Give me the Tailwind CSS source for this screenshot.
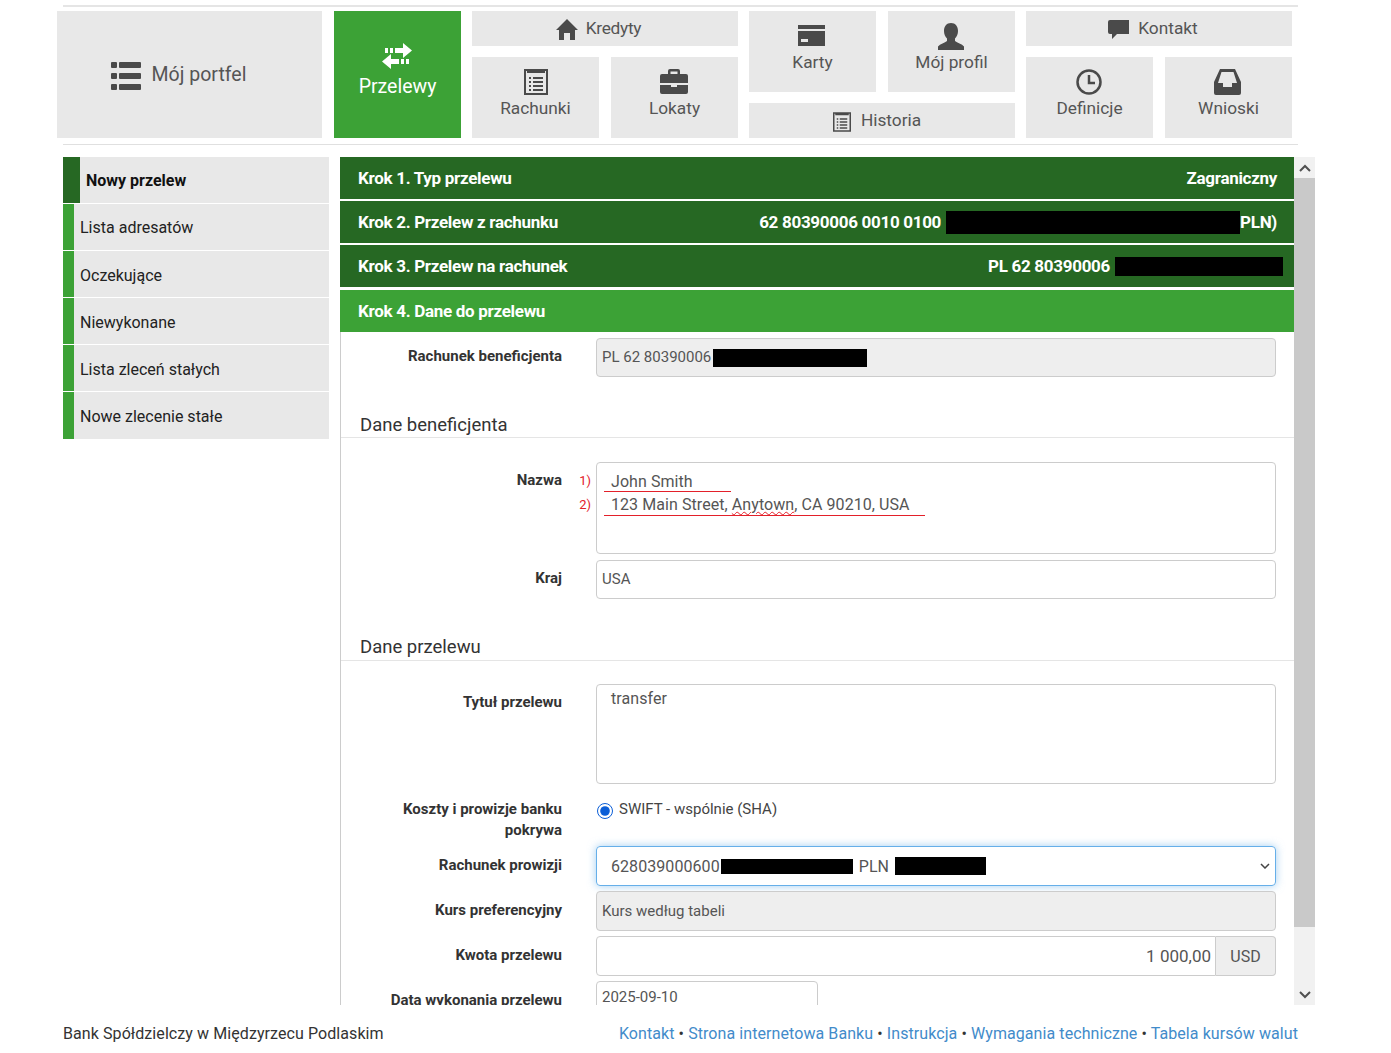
<!DOCTYPE html>
<html lang="pl">
<head>
    <meta charset="UTF-8">
    <meta name="viewport" content="width=device-width, initial-scale=1.0">
    <title>Bank - Przelewy</title>
    <script src="https://cdn.jsdelivr.net/npm/@tailwindcss/browser@4"></script>
</head>
<body class="bg-white font-['Roboto',sans-serif] text-[#555] h-[1053px] overflow-hidden">

<div class="w-[1235px] ml-[63px] mt-[5px] h-[2px] bg-[#e5e5e5]"></div>

<!-- menu -->
<nav class="ml-[57px] mt-[4px] w-[1235px] h-[127px] flex gap-[11px] text-[17.3px] leading-[24px]">
    <a class="w-[265px] mr-[1px] bg-[#e8e8e8] flex items-center justify-center gap-[11px] pr-[22px] text-[19.5px]">
        <svg class="w-[30px] h-[28px] mt-[3px]" viewBox="0 0 30 28" fill="#4a4a4a"><rect x="0" y="0" width="6" height="6" rx="1"/><rect x="8" y="0" width="22" height="6" rx="1"/><rect x="0" y="11" width="6" height="6" rx="1"/><rect x="8" y="11" width="22" height="6" rx="1"/><rect x="0" y="22" width="6" height="6" rx="1"/><rect x="8" y="22" width="22" height="6" rx="1"/></svg>
        <span class="mt-[1px]">Mój portfel</span>
    </a>
    <a class="w-[127px] bg-[#3ca236] text-white flex flex-col items-center pt-[32px] gap-[6px] text-[19.5px]">
        <svg class="w-[30px] h-[26px] -ml-[2px]" viewBox="0 0 30 26" fill="#fff"><rect x="3" y="5" width="3" height="5"/><rect x="8" y="5" width="3" height="5"/><path d="M13 5h8V0l9 7.500L21 15v-5h-8z"/><rect x="24" y="16" width="3" height="5"/><rect x="19" y="16" width="3" height="5"/><path d="M17 16H9v-5L0 18.500 9 26v-5h8z"/></svg>
        <span>Przelewy</span>
    </a>
    <div class="w-[266px] flex flex-col gap-[11px]">
        <a class="h-[35px] bg-[#e8e8e8] flex items-center justify-center gap-[8px] pr-[13px]">
            <svg class="w-[22px] h-[21px] mt-[2px]" viewBox="0 0 22 21" fill="#4a4a4a"><path d="M11 0 22 11h-3v10h-5v-7H8v7H3V11H0z"/></svg>
            <span class="-mt-[1px] tracking-[-0.3px]">Kredyty</span>
        </a>
        <div class="flex justify-between h-[81px]">
            <a class="w-[127px] bg-[#e8e8e8] flex flex-col items-center pt-[12px] gap-[1px]">
                <svg class="w-[24px] h-[26px]" viewBox="0 0 24 26" fill="none" stroke="#4a4a4a"><rect x="1" y="1" width="22" height="24" stroke-width="2"/><path d="M3 2.500h18" stroke-width="3"/><path d="M5 9h2M9 9h10M5 13h2M9 13h10M5 17h2M9 17h10M5 21h2M9 21h10" stroke-width="2"/></svg>
                <span>Rachunki</span>
            </a>
            <a class="w-[127px] bg-[#e8e8e8] flex flex-col items-center pt-[12px] gap-[2px]">
                <svg class="w-[28px] h-[25px] -ml-[2px]" viewBox="0 0 28 25" fill="#4a4a4a"><path d="M10 0h8a2 2 0 0 1 2 2v3h6a2 2 0 0 1 2 2v7H0V7a2 2 0 0 1 2-2h6V2a2 2 0 0 1 2-2zm.500 2.500V5h7V2.500z"/><path d="M0 16h11v2h6v-2h11v7a2 2 0 0 1-2 2H2a2 2 0 0 1-2-2z"/></svg>
                <span>Lokaty</span>
            </a>
        </div>
    </div>
    <div class="w-[266px] flex flex-col gap-[11px]">
        <div class="flex justify-between h-[81px]">
            <a class="w-[127px] bg-[#e8e8e8] flex flex-col items-center pt-[14px] gap-[4px]">
                <svg class="w-[27px] h-[21px] -ml-[2px]" viewBox="0 0 27 21" fill="#4a4a4a"><path d="M0 0h27v4H0z"/><path d="M0 6h27v15H0zm3 8v3h7v-3z" fill-rule="evenodd"/></svg>
                <span>Karty</span>
            </a>
            <a class="w-[127px] bg-[#e8e8e8] flex flex-col items-center pt-[12px]">
                <svg class="w-[28px] h-[27px] -ml-[2px]" viewBox="0 0 28 27" fill="#4a4a4a"><path d="M14 0c4.500 0 7 3.500 7 8 0 3-1.200 5.500-3 7.500V18c2 1.500 7 3 9 5.500V27H1v-3.500C3 21 8 19.500 10 18v-2.500C8.200 13.500 7 11 7 8c0-4.500 2.500-8 7-8z"/></svg>
                <span>Mój profil</span>
            </a>
        </div>
        <a class="h-[35px] bg-[#e8e8e8] flex items-center justify-center gap-[10px] pr-[10px]">
            <svg class="w-[18px] h-[20px] mt-[2px]" viewBox="0 0 24 26" fill="none" stroke="#4a4a4a"><rect x="1" y="1" width="22" height="24" stroke-width="2"/><path d="M3 2.500h18" stroke-width="3"/><path d="M5 9h2M9 9h10M5 13h2M9 13h10M5 17h2M9 17h10M5 21h2M9 21h10" stroke-width="2"/></svg>
            <span class="-mt-[1px]">Historia</span>
        </a>
    </div>
    <div class="w-[266px] flex flex-col gap-[11px]">
        <a class="h-[35px] bg-[#e8e8e8] flex items-center justify-center gap-[9px] pr-[12px]">
            <svg class="w-[21px] h-[19px] mt-[2px]" viewBox="0 0 21 19" fill="#4a4a4a"><path d="M2 0h19v14H9l-5 5v-5H2a2 2 0 0 1-2-2V2a2 2 0 0 1 2-2z"/></svg>
            <span class="-mt-[1px]">Kontakt</span>
        </a>
        <div class="flex justify-between h-[81px]">
            <a class="w-[127px] bg-[#e8e8e8] flex flex-col items-center pt-[12px] gap-[1px]">
                <svg class="w-[26px] h-[26px] -ml-[2px]" viewBox="0 0 26 26" fill="none" stroke="#4a4a4a"><circle cx="13" cy="13" r="11.500" stroke-width="2.500"/><path d="M13 6v8h6" stroke-width="2.500"/></svg>
                <span>Definicje</span>
            </a>
            <a class="w-[127px] bg-[#e8e8e8] flex flex-col items-center pt-[12px] gap-[1px]">
                <svg class="w-[27px] h-[26px] -ml-[2px]" viewBox="0 0 27 26" fill="#4a4a4a"><path d="M6 0h15l6 13v11a2 2 0 0 1-2 2H2a2 2 0 0 1-2-2V13zm1.500 3L4 14h5v4h9v-4h5L19.500 3z" fill-rule="evenodd"/></svg>
                <span>Wnioski</span>
            </a>
        </div>
    </div>
</nav>

<div class="w-[1235px] ml-[63px] mt-[6px] h-[1px] bg-[#e0e0e0]"></div>

<div class="ml-[63px] mt-[12px] flex h-[848px]">
    <!-- side menu -->
    <aside class="w-[266px] flex flex-col gap-[1px] text-[16px] text-[#222] shrink-0">
        <a class="h-[46px] bg-[#e8e8e8] border-l-[17px] border-[#266823] pl-[6px] pt-[2px] flex items-center font-bold text-[#111]">Nowy przelew</a>
        <a class="h-[46px] bg-[#e8e8e8] border-l-[11px] border-[#3ca236] pl-[6px] pt-[2px] flex items-center">Lista adresatów</a>
        <a class="h-[46px] bg-[#e8e8e8] border-l-[11px] border-[#3ca236] pl-[6px] pt-[3px] flex items-center">Oczekujące</a>
        <a class="h-[46px] bg-[#e8e8e8] border-l-[11px] border-[#3ca236] pl-[6px] pt-[3px] flex items-center">Niewykonane</a>
        <a class="h-[46px] bg-[#e8e8e8] border-l-[11px] border-[#3ca236] pl-[6px] pt-[3px] flex items-center">Lista zleceń stałych</a>
        <a class="h-[47px] bg-[#e8e8e8] border-l-[11px] border-[#3ca236] pl-[6px] pt-[2px] flex items-center">Nowe zlecenie stałe</a>
    </aside>

    <!-- form panel -->
    <main class="ml-[11px] w-[954px] shrink-0 overflow-hidden">
        <div class="h-[42px] bg-[#266823] text-white font-bold text-[17px] tracking-[-0.3px] flex items-center justify-between pt-[2px] pl-[18px] pr-[17px]">
            <span>Krok 1. Typ przelewu</span><span>Zagraniczny</span>
        </div>
        <div class="h-[42px] mt-[2px] bg-[#266823] text-white font-bold text-[17px] tracking-[-0.3px] flex items-center justify-between pl-[18px] pr-[17px]">
            <span class="pt-[2px]">Krok 2. Przelew z rachunku</span>
            <span class="flex items-center"><span class="pt-[2px]">62 80390006 0010 0100</span><i class="w-[294px] h-[23px] bg-black ml-[5px]"></i><span class="pt-[2px]">PLN)</span></span>
        </div>
        <div class="h-[42px] mt-[2px] bg-[#266823] text-white font-bold text-[17px] tracking-[-0.3px] flex items-center justify-between pl-[18px] pr-[11px]">
            <span class="pt-[2px]">Krok 3. Przelew na rachunek</span>
            <span class="flex items-center"><span class="pt-[2px]">PL 62 80390006</span><i class="w-[168px] h-[19px] bg-black ml-[5px]"></i></span>
        </div>
        <div class="h-[42px] mt-[3px] bg-[#3ca236] text-white font-bold text-[17px] tracking-[-0.3px] flex items-center pt-[2px] pl-[18px]">
            <span>Krok 4. Dane do przelewu</span>
        </div>

        <div class="border-l border-[#ccc] h-[700px] pt-[6px] text-[15px] leading-[21px]">
            <div class="flex">
                <label class="w-[221px] text-right font-bold text-[15px] text-[#333] pt-[8px] shrink-0">Rachunek beneficjenta</label>
                <div class="ml-[34px] w-[680px] h-[39px] rounded-[4px] border border-[#ccc] bg-[#eee] px-[5px] flex items-center text-[#555]">PL 62 80390006<i class="w-[154px] h-[18px] bg-black ml-[2px]"></i></div>
            </div>

            <h3 class="mt-[35px] h-[25px] pl-[19px] text-[18.5px] text-[#333] leading-[27px] border-b border-[#e5e5e5] box-content">Dane beneficjenta</h3>

            <div class="flex mt-[24px]">
                <label class="w-[221px] text-right font-bold text-[15px] text-[#333] pt-[8px] shrink-0">Nazwa</label>
                <div class="w-[34px] text-right pr-[5px] pt-[7px] text-[13px] leading-[24px] text-[#e3202a] shrink-0">1)<br>2)</div>
                <div class="w-[680px] h-[92px] rounded-[4px] border border-[#ccc] pl-[7px] pt-[8px] text-[16px] tracking-[0.07px]">
                    <div class="w-[127px] h-[21px] border-b border-[#e3202a] pl-[7px] text-[#555]">John Smith</div>
                    <div class="w-[321px] h-[22px] mt-[2px] border-b border-[#e3202a] pl-[7px] text-[#555]">123 Main Street, <span class="underline decoration-wavy decoration-[#e3202a] decoration-1">Anytown</span>, CA 90210, USA</div>
                </div>
            </div>

            <div class="flex mt-[6px]">
                <label class="w-[221px] text-right font-bold text-[15px] text-[#333] pt-[8px] shrink-0">Kraj</label>
                <div class="ml-[34px] w-[680px] h-[39px] rounded-[4px] border border-[#ccc] px-[5px] flex items-center">USA</div>
            </div>

            <h3 class="mt-[36px] h-[25px] pl-[19px] text-[18.5px] text-[#333] leading-[25px] border-b border-[#e5e5e5] box-content">Dane przelewu</h3>

            <div class="flex mt-[23px]">
                <label class="w-[221px] text-right font-bold text-[15px] text-[#333] pt-[8px] shrink-0">Tytuł przelewu</label>
                <div class="ml-[34px] w-[680px] h-[100px] rounded-[4px] border border-[#ccc] pl-[14px] pt-[3px] text-[16px] tracking-[0.07px]">transfer</div>
            </div>

            <div class="flex mt-[15px] h-[47px]">
                <label class="w-[221px] pl-[40px] text-right font-bold text-[15px] text-[#333] shrink-0">Koszty i prowizje banku pokrywa</label>
                <div class="ml-[34px] flex items-start text-[15px] text-[#444]">
                    <input type="radio" checked class="w-[16px] h-[16px] ml-[1px] mt-[4px] accent-[#0b5ed7]">
                    <span class="ml-[6px]">SWIFT - wspólnie (SHA)</span>
                </div>
            </div>

            <div class="flex">
                <label class="w-[221px] text-right font-bold text-[15px] text-[#333] pt-[9px] shrink-0">Rachunek prowizji</label>
                <div class="ml-[34px] w-[680px] h-[40px] rounded-[4px] border border-[#66afe9] shadow-[0_0_8px_rgba(102,175,233,0.6)] pl-[14px] pr-[5px] flex items-center text-[16px] tracking-[0.07px]">628039000600<i class="w-[132px] h-[15px] bg-black ml-[1px]"></i><span class="ml-[6px]">PLN</span><i class="w-[91px] h-[18px] bg-black ml-[6px]"></i>
                    <svg class="ml-auto w-[10px] h-[6px]" viewBox="0 0 10 6" fill="none" stroke="#444" stroke-width="1.500"><path d="M1 1l4 4 4-4"/></svg>
                </div>
            </div>

            <div class="flex mt-[5px]">
                <label class="w-[221px] text-right font-bold text-[15px] text-[#333] pt-[9px] shrink-0">Kurs preferencyjny</label>
                <div class="ml-[34px] w-[680px] h-[40px] rounded-[4px] border border-[#ccc] bg-[#eee] px-[5px] flex items-center">Kurs według tabeli</div>
            </div>

            <div class="flex mt-[5px]">
                <label class="w-[221px] text-right font-bold text-[15px] text-[#333] pt-[9px] shrink-0">Kwota przelewu</label>
                <div class="ml-[34px] w-[680px] h-[40px] flex text-[17px]">
                    <div class="flex-1 rounded-l-[4px] border border-[#ccc] pr-[4px] flex items-center justify-end">1 000,00</div>
                    <div class="w-[60px] rounded-r-[4px] border border-l-0 border-[#ccc] bg-[#eee] flex items-center justify-center text-[16px]">USD</div>
                </div>
            </div>

            <div class="flex mt-[5px]">
                <label class="w-[221px] text-right font-bold text-[15px] text-[#333] pt-[9px] shrink-0">Data wykonania przelewu</label>
                <div class="ml-[34px] w-[222px] h-[40px] rounded-[4px] border border-[#ccc] px-[5px] pt-[5px]">2025-09-10</div>
            </div>
        </div>
    </main>

    <!-- scrollbar -->
    <div class="w-[21px] bg-[#f1f1f1] flex flex-col shrink-0">
        <div class="h-[21px] flex items-center justify-center">
            <svg class="w-[12px] h-[8px]" viewBox="0 0 12 8" fill="none" stroke="#505050" stroke-width="2"><path d="M1 7l5-5 5 5"/></svg>
        </div>
        <div class="h-[749px] bg-[#c9c9c9]"></div>
        <div class="mt-auto h-[21px] flex items-center justify-center">
            <svg class="w-[12px] h-[8px]" viewBox="0 0 12 8" fill="none" stroke="#505050" stroke-width="2"><path d="M1 1l5 5 5-5"/></svg>
        </div>
    </div>
</div>

<footer class="ml-[63px] w-[1235px] mt-[18px] flex justify-between text-[16px] tracking-[0.08px] leading-[21px]">
    <span class="text-[#333]">Bank Spółdzielczy w Międzyrzecu Podlaskim</span>
    <span class="text-[#333]"><a class="text-[#428bca]">Kontakt</a> • <a class="text-[#428bca]">Strona internetowa Banku</a> • <a class="text-[#428bca]">Instrukcja</a> • <a class="text-[#428bca]">Wymagania techniczne</a> • <a class="text-[#428bca]">Tabela kursów walut</a></span>
</footer>

</body>
</html>
